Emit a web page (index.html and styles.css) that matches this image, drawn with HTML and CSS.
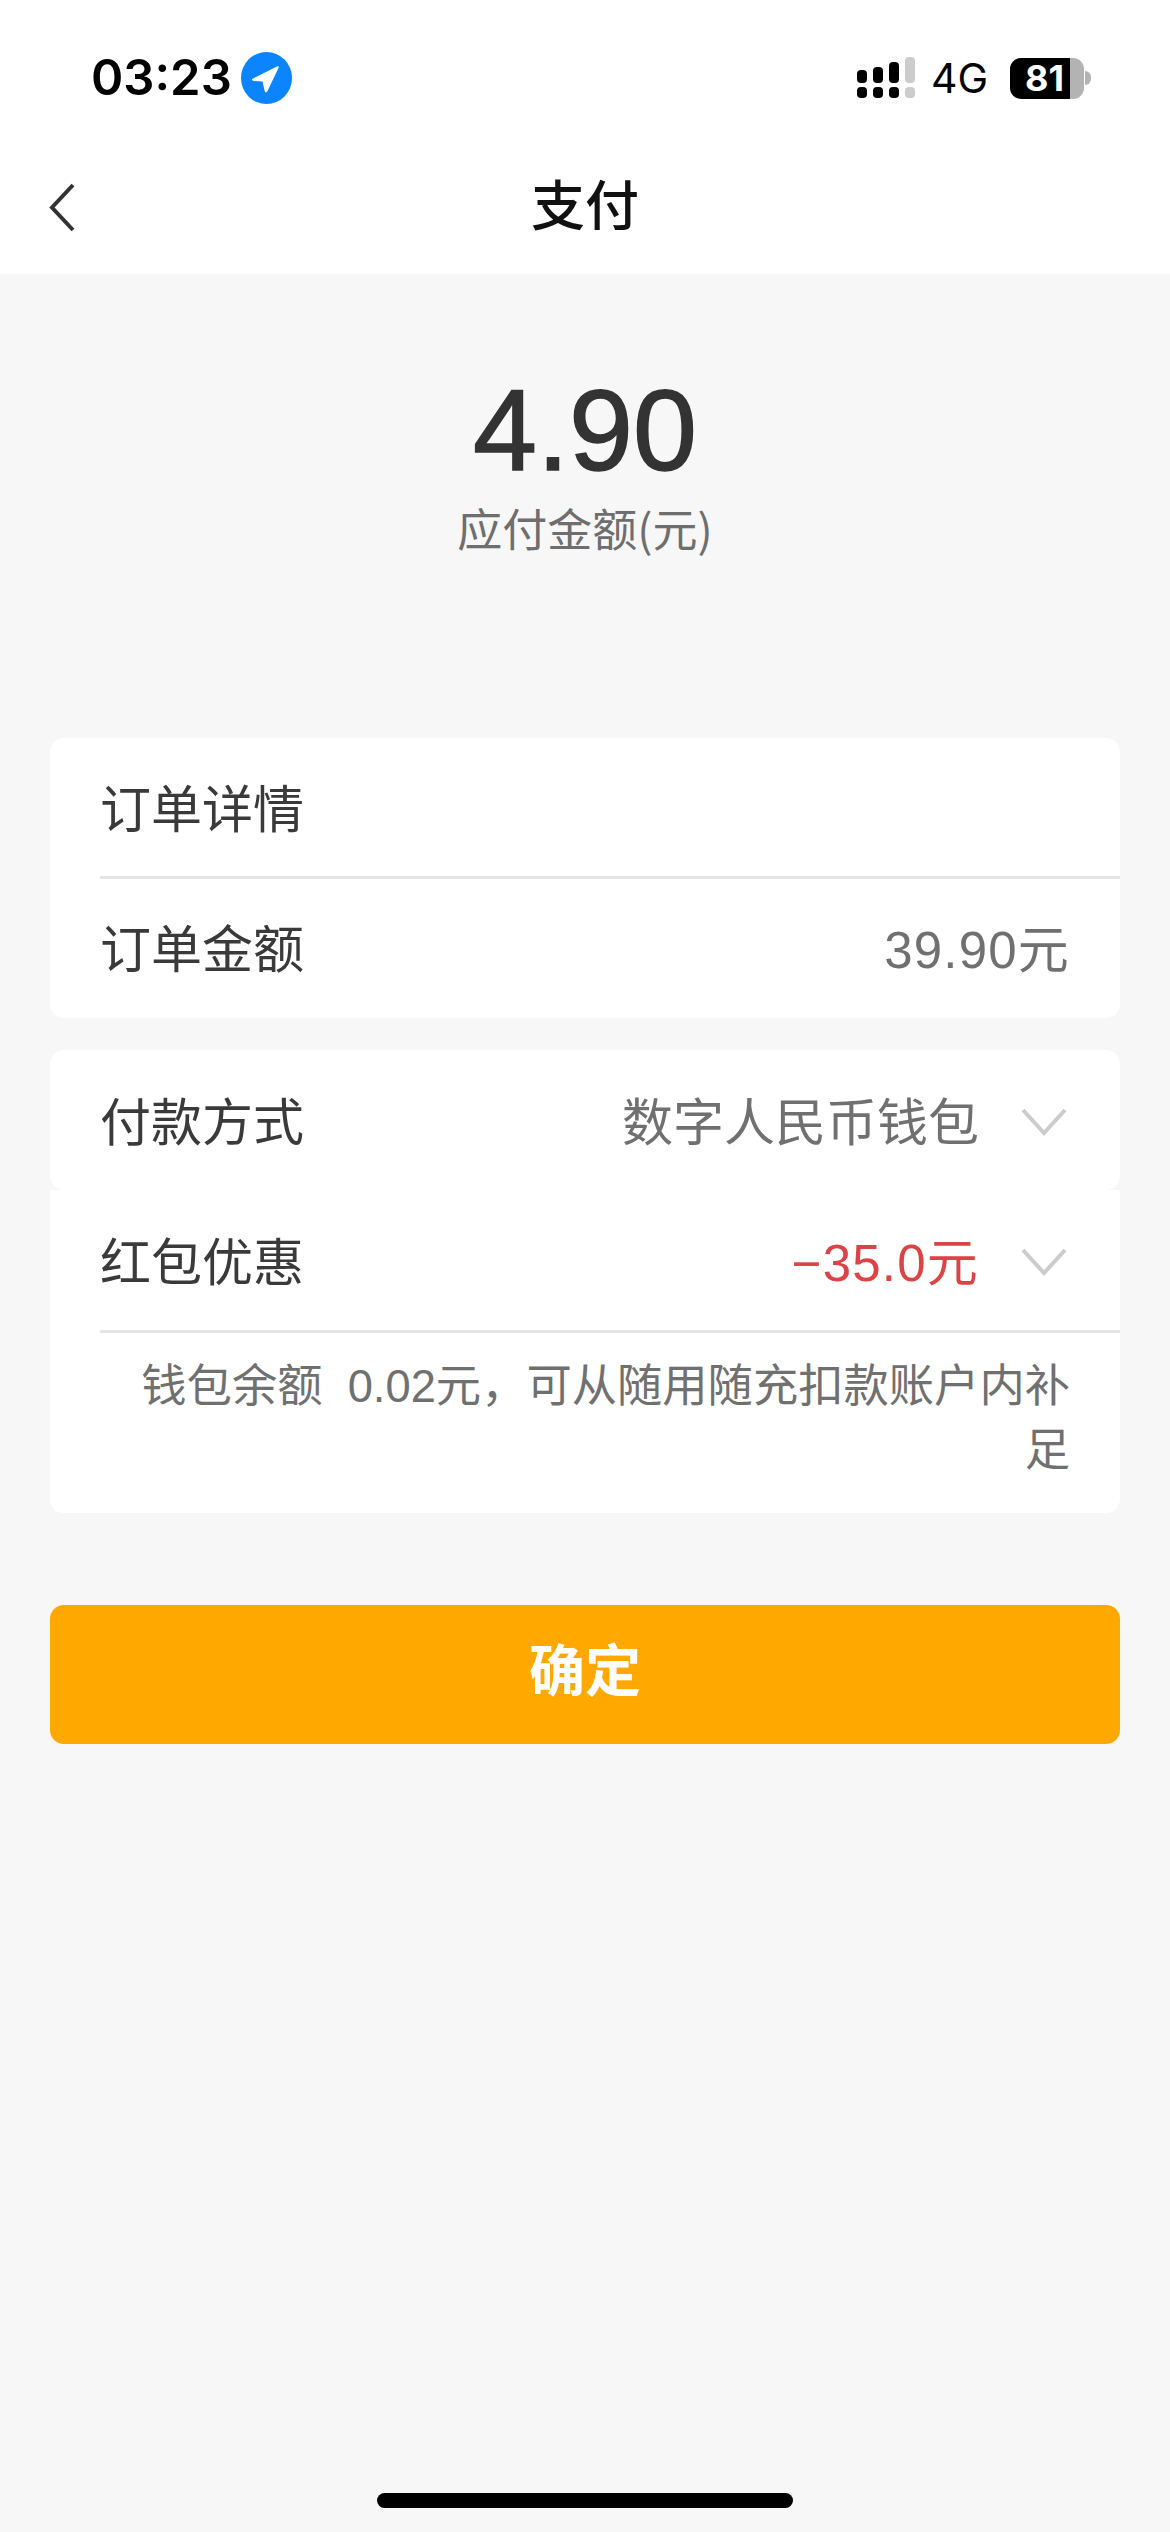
FILE: index.html
```html
<!DOCTYPE html>
<html lang="zh">
<head>
    <meta charset="UTF-8">
    <title>支付</title>
    <link rel="stylesheet" href="styles.css">
</head>
<body>
<div class="page">
    <div class="top">
        <div class="status-bar">
            <div class="status-left">
                <span class="time">03:23</span>
                <svg class="loc-icon" width="51" height="52" viewBox="0 0 51 52">
                    <ellipse cx="25.5" cy="26" rx="25.5" ry="26" fill="#0a84ff"/>
                    <path d="M12 26.5 L36 14.5 Q38.5 13.5 37.5 16 L26.5 39 Q24.5 42 23.5 38.5 L21.5 29.5 L13 29 Q9.5 28 12 26.5Z" fill="#fff"/>
                </svg>
            </div>
            <div class="status-right">
                <svg class="signal" width="58" height="42" viewBox="0 0 58 42">
                    <rect x="0" y="13" width="10" height="13" rx="4" fill="#000"/>
                    <rect x="16" y="10" width="10" height="16" rx="4" fill="#000"/>
                    <rect x="32" y="5" width="10" height="21" rx="4" fill="#000"/>
                    <rect x="48" y="0" width="10" height="26" rx="4" fill="#ccc"/>
                    <rect x="0" y="30" width="10" height="11" rx="4" fill="#000"/>
                    <rect x="16" y="30" width="10" height="11" rx="4" fill="#000"/>
                    <rect x="32" y="30" width="10" height="11" rx="4" fill="#000"/>
                    <rect x="48" y="30" width="10" height="11" rx="4" fill="#ccc"/>
                </svg>
                <span class="net">4G</span>
                <div class="battery">
                    <div class="battery-body"><span class="battery-num">81</span></div>
                    <div class="battery-tip"></div>
                </div>
            </div>
        </div>
        <div class="nav-bar">
            <svg class="back-icon" width="26" height="50" viewBox="0 0 26 50">
                <path d="M24 2 L3 24.5 L24 47" fill="none" stroke="#333" stroke-width="4"/>
            </svg>
            <div class="nav-title">支付</div>
        </div>
    </div>

    <div class="amount-box">
        <div class="amount">4.90</div>
        <div class="amount-label">应付金额(元)</div>
    </div>

    <div class="card">
        <div class="row row-head"><span class="row-label">订单详情</span></div>
        <div class="row row-last">
            <span class="row-label">订单金额</span>
            <span class="row-value num">39.90元</span>
        </div>
    </div>

    <div class="card card-pay">
        <div class="row row-pay">
            <span class="row-label">付款方式</span>
            <span class="row-value">数字人民币钱包</span>
            <svg class="arrow" width="46" height="28" viewBox="0 0 46 28"><path d="M2 2 L23 25 L44 2" fill="none" stroke="#ccc" stroke-width="4"/></svg>
        </div>
    </div>
    <div class="card card-coupon">
        <div class="row row-pay row-head">
            <span class="row-label">红包优惠</span>
            <span class="row-value num red">−35.0元</span>
            <svg class="arrow" width="46" height="28" viewBox="0 0 46 28"><path d="M2 2 L23 25 L44 2" fill="none" stroke="#ccc" stroke-width="4"/></svg>
        </div>
        <div class="balance-tip">钱包余额&nbsp;&nbsp;0.02元，可从随用随充扣款账户内补足</div>
    </div>

    <div class="confirm-btn">确定</div>

    <div class="home-bar"></div>
</div>
</body>
</html>
```

FILE: styles.css
```css
* {
    box-sizing: border-box;
}
body {
    margin: 0;
    background: #f7f7f7;
    font-family: "Liberation Sans", "Noto Sans CJK SC", sans-serif;
}
.page {
    display: flex;
    flex-direction: column;
    height: 2532px;
    overflow: hidden;
}
.top {
    background: #fff;
    height: 274px;
}
.status-bar {
    height: 157px;
    padding: 52px 79px 0 91px;
    display: flex;
    justify-content: space-between;
    align-items: flex-start;
}
.status-left {
    display: flex;
    align-items: center;
    gap: 9px;
}
.time {
    font-family: Inter, sans-serif;
    font-size: 49px;
    font-weight: 600;
    line-height: 52px;
    color: #000;
}
.status-right {
    display: flex;
    align-items: center;
    gap: 20px;
    padding-top: 5px;
}
.signal {
    margin-right: -4px;
}
.net {
    font-family: Inter, sans-serif;
    font-size: 41px;
    line-height: 42px;
    color: #000;
}
.battery {
    display: flex;
    align-items: center;
    margin-left: 2px;
}
.battery-body {
    width: 74px;
    height: 41px;
    border-radius: 11px;
    background: linear-gradient(to right, #000 60px, #b3b3b3 60px);
    display: flex;
    align-items: center;
    padding-left: 15px;
}
.battery-num {
    font-family: Inter, sans-serif;
    font-size: 36px;
    font-weight: 700;
    color: #fff;
    line-height: 41px;
}
.battery-tip {
    width: 6px;
    height: 14px;
    margin-left: 1px;
    background: #b3b3b3;
    border-radius: 0 7px 7px 0;
}
.nav-bar {
    position: relative;
    height: 117px;
    display: flex;
    align-items: center;
    justify-content: center;
}
.back-icon {
    position: absolute;
    left: 49px;
    top: 26px;
}
.nav-title {
    font-size: 54px;
    font-weight: 500;
    color: #111;
    margin-top: -26px;
}
.amount-box {
    height: 464px;
    padding-top: 99px;
    text-align: center;
}
.amount {
    font-family: "Liberation Sans", sans-serif;
    font-size: 115px;
    -webkit-text-stroke: 1.5px #333;
    line-height: 1;
    color: #333;
    margin-bottom: 10px;
}
.amount-label {
    font-family: "Noto Sans CJK SC", sans-serif;
    font-size: 45px;
    line-height: 60px;
    color: #6e6e6e;
}
.card {
    margin: 0 50px;
    background: #fff;
    border-radius: 14px;
}
.row {
    display: flex;
    align-items: center;
    justify-content: space-between;
    padding: 0 50px 4px;
    height: 141px;
}
.row-head {
    height: 141px;
    padding-right: 0;
    margin-left: 50px;
    padding-left: 0;
    padding-bottom: 2px;
    border-bottom: 3px solid #e4e4e4;
}
.row-last {
    height: 139px;
    padding-bottom: 6px;
}
.row-label {
    font-size: 51px;
    color: #3a3a3a;
}
.row-value {
    font-size: 51px;
    color: #707070;
}
.row-value.num {
    letter-spacing: 1.2px;
}
.row-value.red {
    color: #dc4344;
}
.card-pay {
    margin-top: 32px;
    height: 140px;
}
.card-coupon {
    border-radius: 0 0 14px 14px;
    height: 323px;
}
.row-pay {
    justify-content: flex-start;
    padding-right: 53px;
}
.row-pay .row-value {
    margin-left: auto;
}
.arrow {
    margin-left: 42px;
    margin-top: 6px;
}
.card-coupon .row-pay {
    height: 143px;
    padding-right: 53px;
}
.balance-tip {
    padding: 22px 50px 0 90px;
    text-align: right;
    font-size: 45.3px;
    line-height: 64px;
    color: #707070;
}
.confirm-btn {
    margin: 92px 50px 0;
    height: 139px;
    border-radius: 14px;
    background: #ffa800;
    color: #fff;
    font-size: 56px;
    font-weight: 700;
    line-height: 134px;
    text-align: center;
}
.home-bar {
    width: 416px;
    height: 15px;
    margin: auto auto 24px;
    background: #000;
    border-radius: 8px;
}
```
